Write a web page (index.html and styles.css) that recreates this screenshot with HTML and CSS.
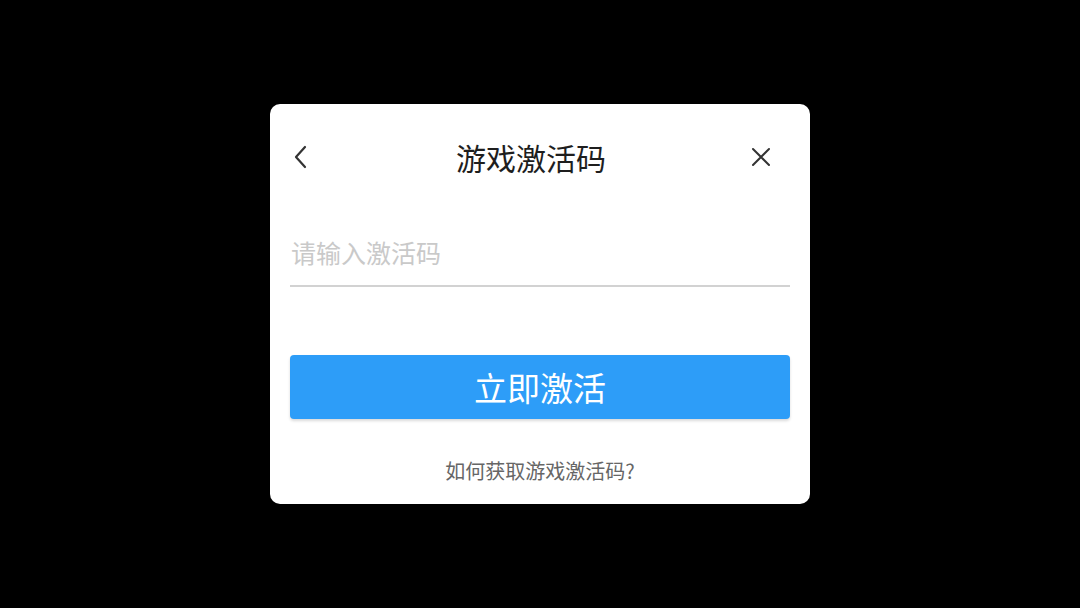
FILE: index.html
```html
<!DOCTYPE html>
<html lang="zh-CN">
<head>
<meta charset="utf-8">
<title>游戏激活码</title>
<link rel="stylesheet" href="styles.css">
</head>
<body>
<div class="dialog">
  <div class="header">
    <button class="back" aria-label="返回">
      <svg width="16" height="24" viewBox="0 0 16 24"><path d="M13 2 L4 12 L13 22" fill="none" stroke="#333" stroke-width="2.2" stroke-linecap="round" stroke-linejoin="round"/></svg>
    </button>
    <div class="title">游戏激活码</div>
    <button class="close" aria-label="关闭">
      <svg width="20" height="20" viewBox="0 0 20 20"><path d="M2 2 L18 18 M18 2 L2 18" fill="none" stroke="#333" stroke-width="2" stroke-linecap="round"/></svg>
    </button>
  </div>
  <input class="code" type="text" placeholder="请输入激活码">
  <button class="activate">立即激活</button>
  <a class="help" href="#">如何获取游戏激活码?</a>
</div>
</body>
</html>
```

FILE: styles.css
```css
html, body {
  margin: 0;
  height: 100%;
  background: #000;
}
body {
  display: flex;
  align-items: center;
  justify-content: center;
  font-family: "Noto Sans CJK SC", "Noto Sans", sans-serif;
}
.dialog {
  box-sizing: border-box;
  width: 540px;
  height: 400px;
  background: #fff;
  border-radius: 10px;
  padding: 23px 20px 0;
  display: flex;
  flex-direction: column;
}
.header {
  display: flex;
  align-items: center;
  height: 60px;
}
.back, .close {
  border: 0;
  background: none;
  padding: 0;
  height: 60px;
  display: flex;
  align-items: center;
  cursor: pointer;
}
.back {
  width: 22px;
  justify-content: flex-start;
  padding-left: 2px;
}
.close {
  width: 40px;
  justify-content: flex-start;
  padding-left: 1px;
}
.title {
  flex: 1;
  text-align: center;
  font-size: 30px;
  color: #1e1e1e;
  line-height: 60px;
}
.code {
  box-sizing: content-box;
  margin-top: 38px;
  height: 54px;
  padding: 0 0 6px 1px;
  border: 0;
  border-bottom: 2px solid #d2d2d2;
  font-family: inherit;
  font-size: 25px;
  color: #333;
  outline: none;
  background: transparent;
}
.code::placeholder {
  color: #c9c9c9;
}
.activate {
  margin-top: 68px;
  height: 64px;
  border: 0;
  border-radius: 4px;
  background: #2d9df8;
  color: #fff;
  font-family: inherit;
  font-size: 33px;
  box-shadow: 0 2px 3px rgba(0, 0, 0, 0.15);
  cursor: pointer;
}
.help {
  margin-top: 37px;
  text-align: center;
  font-size: 20px;
  line-height: 30px;
  color: #666;
  text-decoration: none;
}
```
